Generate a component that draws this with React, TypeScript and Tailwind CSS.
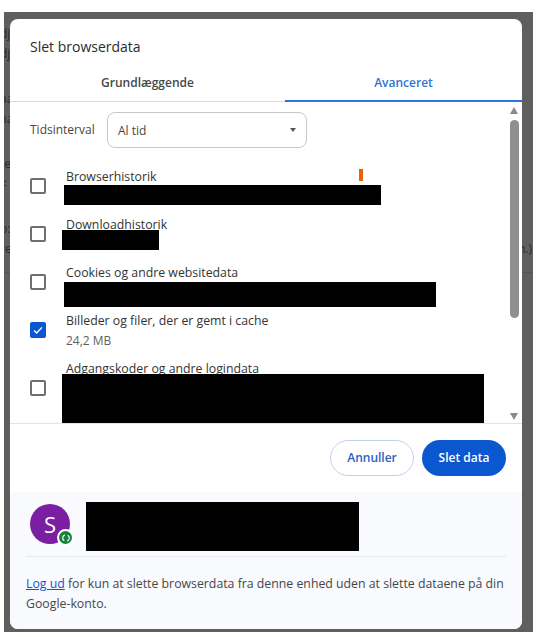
const rows = [
  { label: "Browserhistorik", h: "h-12" },
  { label: "Downloadhistorik", h: "h-12" },
  { label: "Cookies og andre websitedata", h: "h-12" },
  { label: "Billeder og filer, der er gemt i cache", sub: "24,2 MB", checked: true, h: "h-12" },
  { label: "Adgangskoder og andre logindata", h: "h-[68px]" },
];

// text of the page behind the dialog, only the slivers that show
const behind = [
  { text: "dj", className: "top-[14px]" },
  { text: "dj", className: "top-[34px]" },
  { text: "aa", className: "top-[79px]" },
  { text: "aa", className: "top-[99px]" },
  { text: "te", className: "top-[144px]" },
  { text: "<", className: "top-[164px]" },
  { text: "o:", className: "top-[209px]" },
  { text: "re", className: "top-[229px]" },
];

function Checkbox({ checked }: { checked?: boolean }) {
  if (checked) {
    return (
      <span className="flex h-4 w-4 items-center justify-center rounded-[2px] bg-[#0b57d0]">
        <svg viewBox="0 0 16 16" className="h-3.5 w-3.5" fill="none" stroke="white" strokeWidth="1.6">
          <path d="M3.5 8.5l3 3 6-6.5" />
        </svg>
      </span>
    );
  }
  return <span className="h-4 w-4 rounded-[2px] border-2 border-[#6f6f6f] bg-white" />;
}

export default function App() {
  return (
    <div className="h-[637px] w-[539px] bg-white pl-[4px] pt-3 font-['Open_Sans','Liberation_Sans',sans-serif]">
      <div className="relative h-[620px] w-[529px] overflow-hidden bg-[#5f5f5f] pl-1.5 pt-[7px]">
        {behind.map((b, i) => (
          <span key={i} className={`absolute -left-1 text-xs text-[#2a2a2a] ${b.className}`}>
            {b.text}
          </span>
        ))}
        <span className="absolute right-[1px] top-[229px] text-xs text-[#2a2a2a]">n.)</span>
        <span className="absolute left-0 top-[260px] h-px w-full bg-[#555555]" />

        <div className="relative flex h-[610px] w-[512px] flex-col overflow-hidden rounded-lg bg-white text-[#1f1f1f]">
          <h1 className="pl-5 pt-[18px] text-[14px] leading-[19px] font-normal text-[#2b2b2b]">Slet browserdata</h1>

          <div className="mt-[19px] flex h-[27px] border-b border-[#d9d9d9]">
            <div className="w-[275px] pb-2 text-center text-xs leading-[16px] font-semibold text-[#474747]">
              Grundlæggende
            </div>
            <div className="h-[27px] flex-1 border-b-2 border-[#2f74d8] text-center text-xs leading-[16px] font-semibold text-[#2f74d8]">
              Avanceret
            </div>
          </div>

          <div className="flex h-[322px] border-b border-[#e3e3e3]">
            <div className="relative min-w-0 flex-1 overflow-hidden pl-5">
              <div className="flex items-center pt-[10px]">
                <span className="w-[77px] text-xs text-[#474747]">Tidsinterval</span>
                <div className="flex h-9 w-[200px] items-center justify-between rounded-lg border border-[#c7c7c7] pl-[10px] pr-[10px]">
                  <span className="pt-[2px] text-xs text-[#474747]">Al tid</span>
                  <span className="h-0 w-0 border-x-[3.5px] border-t-4 border-x-transparent border-t-[#555555]" />
                </div>
              </div>

              <div className="mt-[14px]">
                {rows.map((row) => (
                  <div key={row.label} className={`flex items-center ${row.h}`}>
                    <Checkbox checked={row.checked} />
                    <div className="ml-5 self-start pt-[6px]">
                      <div className="text-[12.3px] leading-[18px] whitespace-nowrap text-[#333333]">{row.label}</div>
                      {row.sub && <div className="mt-[2px] text-xs leading-[18px] text-[#5f5f5f]">{row.sub}</div>}
                    </div>
                  </div>
                ))}
              </div>

              {/* redaction bars and the orange mark lie over the list */}
              <span className="absolute left-[54px] top-[83px] h-5 w-[317px] bg-black" />
              <span className="absolute left-[349px] top-[67px] h-3 w-1 bg-[#e8610c]" />
              <span className="absolute left-[52px] top-[128px] h-5 w-[97px] bg-black" />
              <span className="absolute left-[54px] top-[180px] h-[25px] w-[372px] bg-black" />
              <span className="absolute left-[52px] top-[272px] h-[49px] w-[422px] bg-black" />
            </div>

            <div className="flex w-3 flex-col items-start pr-[3px] pt-[5px]">
              <span className="h-0 w-0 border-x-[4.5px] border-b-[7px] border-x-transparent border-b-[#8a8a8a]" />
              <span className="mt-[6px] h-[198px] w-[9px] rounded-full bg-[#8f8f8f]" />
              <span className="mt-[95px] h-0 w-0 border-x-[4.5px] border-t-[7px] border-x-transparent border-t-[#8a8a8a]" />
            </div>
          </div>

          <div className="flex h-[68px] items-center justify-end gap-2 pr-4">
            <button className="h-9 w-[84px] rounded-full border border-[#c2d0ee] text-xs font-semibold text-[#2b62c4]">
              Annuller
            </button>
            <button className="h-9 w-[84px] rounded-full bg-[#0b57d0] text-xs font-semibold text-white">
              Slet data
            </button>
          </div>

          <div className="flex-1 bg-[#f8fafd] px-4 pt-[10px]">
            <div className="flex h-[55px] items-start border-b border-[#e6e9ee] pl-1">
              <div className="relative mt-[2px] h-10 w-10 rounded-full bg-[#7b1fa2] text-center text-[22px] leading-10 text-white">
                S
                <span className="absolute -bottom-[2px] -right-[4px] flex h-[17px] w-[17px] items-center justify-center rounded-full border-2 border-white bg-[#188038]">
                  <svg viewBox="0 0 12 12" className="h-2.5 w-2.5" fill="none" stroke="white" strokeWidth="1.4">
                    <path d="M4.6 2.2A4 4 0 0 0 4 9.4M7.4 9.8A4 4 0 0 0 8 2.6" />
                  </svg>
                </span>
              </div>
              <span className="ml-4 h-[49px] w-[273px] bg-black" />
            </div>
            <p className="mt-[17px] w-[484px] text-[12.3px] leading-5 text-[#474747]">
              <a className="text-[#0b57d0] underline">Log ud</a> for kun at slette browserdata fra denne enhed uden at
              slette dataene på din Google-konto.
            </p>
          </div>
        </div>
      </div>
    </div>
  );
}
